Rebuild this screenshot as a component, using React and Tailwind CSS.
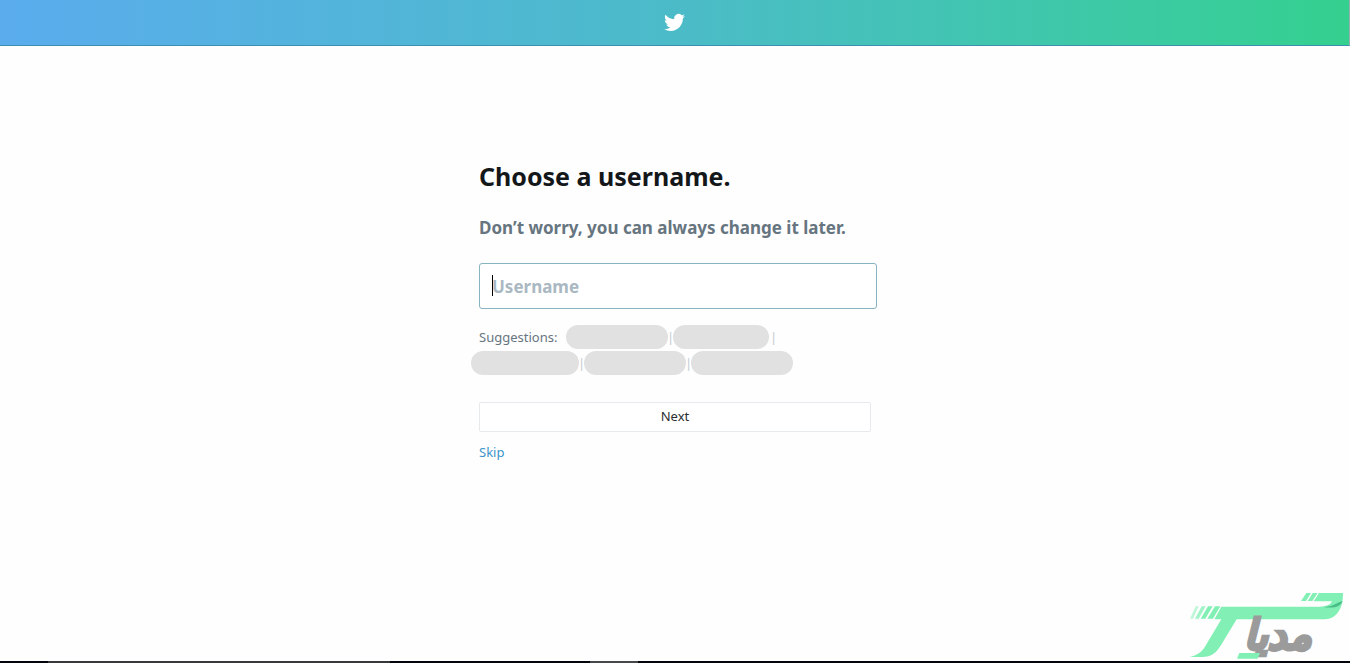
import React from 'react'

const TwitterBird = () => (
  <svg viewBox="0 0 24 24" className="h-[21px] w-[21px] fill-white" aria-label="Twitter">
    <path d="M23.953 4.57a10 10 0 01-2.825.775 4.958 4.958 0 002.163-2.723c-.951.555-2.005.959-3.127 1.184a4.92 4.92 0 00-8.384 4.482C7.69 8.095 4.067 6.13 1.64 3.162a4.822 4.822 0 00-.666 2.475c0 1.71.87 3.213 2.188 4.096a4.904 4.904 0 01-2.228-.616v.06a4.923 4.923 0 003.946 4.827 4.996 4.996 0 01-2.212.085 4.936 4.936 0 004.604 3.417 9.867 9.867 0 01-6.102 2.105c-.39 0-.779-.023-1.17-.067a13.995 13.995 0 007.557 2.209c9.053 0 13.998-7.496 13.998-13.985 0-.21 0-.42-.015-.63A9.935 9.935 0 0024 4.59z" />
  </svg>
)

const Watermark = () => (
  <svg
    viewBox="0 0 510 234"
    className="pointer-events-none absolute right-0 bottom-0 h-[78px] w-[170px]"
  >
    {/* Swoosh and the long top stroke */}
    <g fill="#82f0b5">
      <path d="M124 65H418C439 65 451 60 456 49H401L417 24H489C489 50 484 75 466 91C454 102 439 103 425 103H170L127 174C109 205 94 216 67 216H28C49 211 62 204 73 188L124 103H103Z" />
      <path d="M105 64H121L99 101H82Z" />
      <path d="M84 64H98L76 101H62Z" />
      <path d="M65 64H77L56 101H45Z" opacity=".75" />
      <path d="M47 64H56L39 101H30Z" opacity=".5" />
      <path d="M379 24H393L378 48H363Z" />
      <path d="M398 24H413L397 48H383Z" />
    </g>
    <path d="M488 48C480 68 459 70 430 66C458 65 471 53 488 48Z" fill="#49bd87" />
    <text
      x="293"
      y="193"
      textAnchor="middle"
      direction="rtl"
      fontFamily="'DejaVu Sans', sans-serif"
      fontSize="124"
      fontWeight="700"
      fontStyle="italic"
      fill="#9b9b9b"
      stroke="#9b9b9b"
      strokeWidth="9"
    >
      مدیا
    </text>
    <path d="M178 204H240L233 221H171Z" fill="#82f0b5" />
  </svg>
)

const Pill = ({ className }) => (
  <span className={`block h-6 rounded-full bg-[#e1e1e1] ${className}`} />
)

const Divider = () => <span className="flex w-[5px] justify-center text-[#c3ccd2]">|</span>

const App = () => {
  return (
    <div className="relative flex min-h-screen flex-col bg-[#fefefe] font-['Noto_Sans','Open_Sans',sans-serif] text-[#14171a]">
      <header className="flex h-[46px] items-center justify-center border-r border-b border-r-[#9aaeb0] border-b-[#3c8fae] bg-linear-to-r from-[#5aaced] via-[#4bbbc8] to-[#34d08f]">
        <TwitterBird />
      </header>

      <main className="mx-auto w-full max-w-[392px] flex-1 pt-28">
        <h1 className="text-[25px] leading-9 font-bold">Choose a username.</h1>
        <h2 className="mt-5 text-[17px] leading-7 font-bold whitespace-nowrap text-[#66757f]">
          Don’t worry, you can always change it later.
        </h2>

        <form className="mt-[21px]">
          <div className="relative -mr-[6px]">
            <input
              type="text"
              aria-label="Username"
              placeholder="Username"
              className="block h-[46px] w-full rounded-[3px] border border-[#86b4bf] bg-white px-3 text-[17px] font-bold caret-transparent outline-none placeholder:text-[#aab8c2]"
            />
            {/* Text cursor */}
            <span className="absolute top-3 left-[13px] h-[21px] w-px bg-black" />
          </div>

          <div className="mt-4 text-[13px] leading-6 text-[#66757f]">
            <div className="flex items-center">
              <span className="w-[87px]">Suggestions:</span>
              <Pill className="w-[102px]" />
              <Divider />
              <Pill className="w-24" />
              <span className="ml-[2px]">
                <Divider />
              </span>
            </div>
            <div className="mt-[2px] -ml-2 flex items-center">
              <Pill className="w-[108px]" />
              <Divider />
              <Pill className="w-[102px]" />
              <Divider />
              <Pill className="w-[102px]" />
            </div>
          </div>

          <button
            type="button"
            className="mt-[27px] block h-[30px] w-full rounded-[2px] border border-[#e6eaed] bg-white text-[13px] text-[#292f33]"
          >
            Next
          </button>
          <a href="#skip" className="mt-2 inline-block text-[13px] leading-6 text-[#3b94c9]">
            Skip
          </a>
        </form>
      </main>

      <Watermark />

      <div className="relative flex h-[2px] bg-[#02060c]">
        <span className="ml-12 w-[342px] bg-[#363839]" />
        <span className="ml-[200px] w-12 bg-[#45484b]" />
      </div>
    </div>
  )
}

export default App
